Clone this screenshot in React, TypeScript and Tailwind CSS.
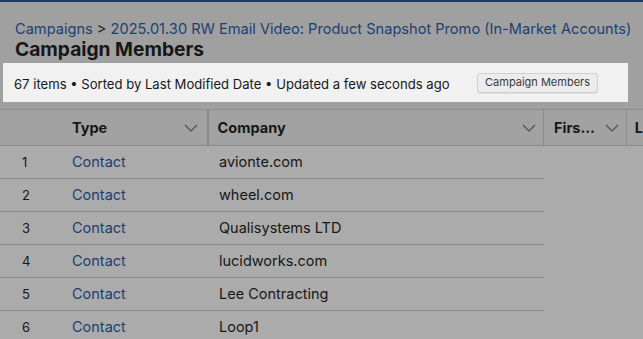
const rows = [
  { n: 1, type: "Contact", company: "avionte.com" },
  { n: 2, type: "Contact", company: "wheel.com" },
  { n: 3, type: "Contact", company: "Qualisystems LTD" },
  { n: 4, type: "Contact", company: "lucidworks.com" },
  { n: 5, type: "Contact", company: "Lee Contracting" },
  { n: 6, type: "Contact", company: "Loop1" },
];

function Chevron() {
  return (
    <svg width="14" height="8" viewBox="0 0 14 8" fill="none" className="text-[#555]">
      <polyline points="1,1 7,7 13,1" stroke="currentColor" strokeWidth="1.3" />
    </svg>
  );
}

export default function App() {
  return (
    <div
      className="w-[643px] h-[339px] overflow-hidden bg-[#a0a0a0] text-[#171717]"
      style={{ fontFamily: "Inter, 'Noto Sans', sans-serif" }}
    >
      <div className="h-[2px] bg-[#1d3b63]" />

      {/* header */}
      <div className="pt-[18px] pl-[15px]">
        <div className="whitespace-nowrap text-[14.6px] leading-[18px] text-[#1c3f72]">
          Campaigns <span className="text-[#1a1a1a]">&gt;</span> 2025.01.30 RW Email Video: Product Snapshot Promo (In-Market Accounts)
        </div>
        <h1 className="whitespace-nowrap text-[19.2px] leading-[22px] font-bold">Campaign Members</h1>
      </div>

      <div className="mt-[3px] ml-[3px] w-[625px] h-[39px] bg-[#f1f1f1] flex items-center justify-between pl-[11px] pr-[30px]">
        <span className="whitespace-nowrap text-[13.1px] pt-[4px]">
          67 items • Sorted by Last Modified Date • Updated a few seconds ago
        </span>
        <span className="whitespace-nowrap h-[20px] px-[7px] flex items-center text-[11px] text-[#3a3a3a] bg-[#ececec] border border-[#cfcfcf] rounded-[3px] shadow-[0_1px_1px_rgba(0,0,0,0.08)]">
          Campaign Members
        </span>
      </div>

      {/* table */}
      <div className="mt-[7px] border-t border-[#8c8c8c]">
        <div className="flex h-[36px] bg-[#a2a2a2] border-b border-[#8c8c8c] text-[14.5px] font-bold">
          <div className="w-[57px]" />
          <div className="w-[152px] flex items-center justify-between pl-[15px] pr-[9px] border-r-2 border-[#888888]">
            <span>Type</span>
            <Chevron />
          </div>
          <div className="w-[336px] flex items-center justify-between pl-[9px] pr-[7px] border-r border-[#8c8c8c]">
            <span>Company</span>
            <Chevron />
          </div>
          <div className="w-[83px] flex items-center justify-between pl-[10px] pr-[7px] border-r border-[#8c8c8c]">
            <span>Firs...</span>
            <Chevron />
          </div>
          <div className="flex items-center pl-[8px]">
            <span>L</span>
          </div>
        </div>

        <div className="bg-[#ababab]">
          {rows.map((r) => (
            <div
              key={r.n}
              className="flex w-[544px] h-[33px] items-center border-b border-[#8c8c8c] text-[14.5px]"
            >
              <div className="w-[57px] pl-[22px] text-[13px] pt-[2px]">{r.n}</div>
              <div className="w-[152px] pl-[15px] text-[#1c3f72]">{r.type}</div>
              <div className="pl-[10px]">{r.company}</div>
            </div>
          ))}
          <div className="h-[40px]" />
        </div>
      </div>
    </div>
  );
}
